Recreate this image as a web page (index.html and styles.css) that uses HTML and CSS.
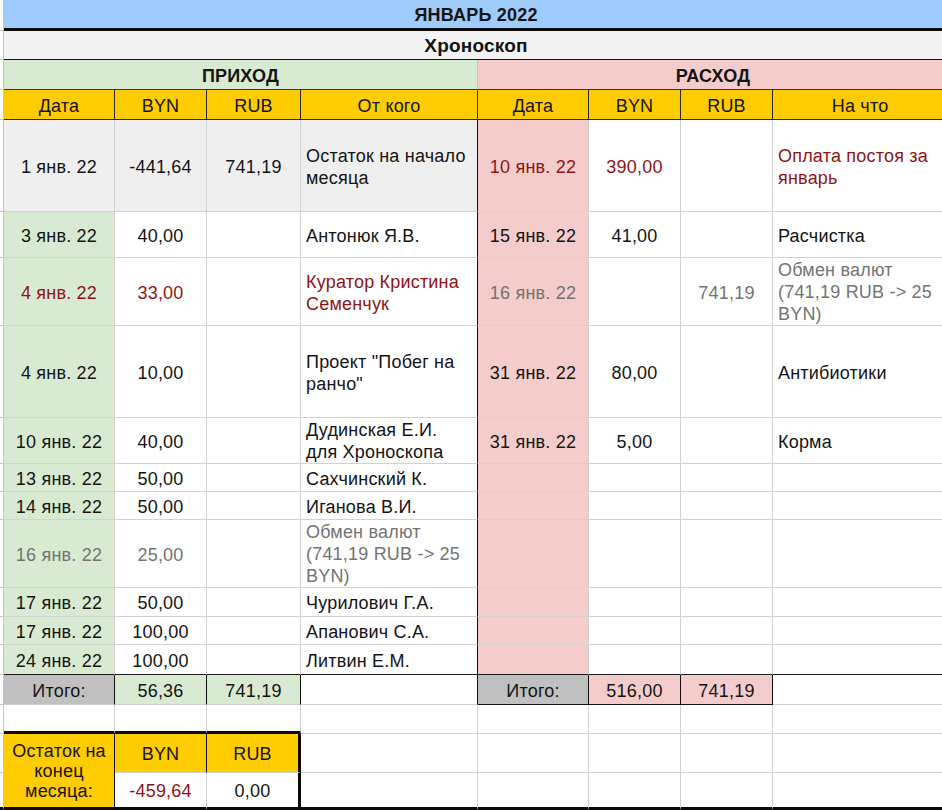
FILE: index.html
```html
<!DOCTYPE html>
<html lang="ru">
<head>
<meta charset="utf-8">
<title>Январь 2022 — Хроноскоп</title>
<link rel="stylesheet" href="styles.css">
</head>
<body>
<table class="sheet">
  <colgroup>
    <col class="w-strip"><col class="w-date"><col class="w-byn"><col class="w-rub"><col class="w-who">
    <col class="w-date"><col class="w-byn"><col class="w-rub2"><col class="w-what">
  </colgroup>
  <tbody>
    <tr class="r-title">
      <td class="strip"></td>
      <td class="title" colspan="8">ЯНВАРЬ 2022</td>
    </tr>
    <tr class="r-sub">
      <td class="strip"></td>
      <td class="subtitle" colspan="8">Хроноскоп</td>
    </tr>
    <tr class="r-sect">
      <td class="strip"></td>
      <td class="sect income" colspan="4">ПРИХОД</td>
      <td class="sect expense" colspan="4">РАСХОД</td>
    </tr>
    <tr class="r-head">
      <td class="strip"></td>
      <td class="head">Дата</td><td class="head">BYN</td><td class="head">RUB</td><td class="head">От кого</td>
      <td class="head">Дата</td><td class="head">BYN</td><td class="head">RUB</td><td class="head">На что</td>
    </tr>
    <tr class="r-92">
      <td class="strip"></td>
      <td class="grey">1 янв. 22</td><td class="grey">-441,64</td><td class="grey">741,19</td><td class="grey l div">Остаток на начало<br>месяца</td>
      <td class="pd red">10 янв. 22</td><td class="red">390,00</td><td></td><td class="l red">Оплата постоя за<br>январь</td>
    </tr>
    <tr class="r-46">
      <td class="strip"></td>
      <td class="gd">3 янв. 22</td><td>40,00</td><td></td><td class="l div">Антонюк Я.В.</td>
      <td class="pd">15 янв. 22</td><td>41,00</td><td></td><td class="l">Расчистка</td>
    </tr>
    <tr class="r-68">
      <td class="strip"></td>
      <td class="gd red">4 янв. 22</td><td class="red">33,00</td><td></td><td class="l div red">Куратор Кристина<br>Семенчук</td>
      <td class="pd muted">16 янв. 22</td><td></td><td class="muted">741,19</td><td class="l tight muted">Обмен валют<br>(741,19 RUB -&gt; 25<br>BYN)</td>
    </tr>
    <tr class="r-92">
      <td class="strip"></td>
      <td class="gd">4 янв. 22</td><td>10,00</td><td></td><td class="l div">Проект "Побег на<br>ранчо"</td>
      <td class="pd">31 янв. 22</td><td>80,00</td><td></td><td class="l">Антибиотики</td>
    </tr>
    <tr class="r-46">
      <td class="strip"></td>
      <td class="gd">10 янв. 22</td><td>40,00</td><td></td><td class="l tight div">Дудинская Е.И.<br>для Хроноскопа</td>
      <td class="pd">31 янв. 22</td><td>5,00</td><td></td><td class="l">Корма</td>
    </tr>
    <tr class="r-28">
      <td class="strip"></td>
      <td class="gd">13 янв. 22</td><td>50,00</td><td></td><td class="l div">Сахчинский К.</td>
      <td class="pd"></td><td></td><td></td><td></td>
    </tr>
    <tr class="r-28">
      <td class="strip"></td>
      <td class="gd">14 янв. 22</td><td>50,00</td><td></td><td class="l div">Иганова В.И.</td>
      <td class="pd"></td><td></td><td></td><td></td>
    </tr>
    <tr class="r-68">
      <td class="strip"></td>
      <td class="gd muted">16 янв. 22</td><td class="muted">25,00</td><td></td><td class="l tight div muted">Обмен валют<br>(741,19 RUB -&gt; 25<br>BYN)</td>
      <td class="pd"></td><td></td><td></td><td></td>
    </tr>
    <tr class="r-29">
      <td class="strip"></td>
      <td class="gd">17 янв. 22</td><td>50,00</td><td></td><td class="l div">Чурилович Г.А.</td>
      <td class="pd"></td><td></td><td></td><td></td>
    </tr>
    <tr class="r-28">
      <td class="strip"></td>
      <td class="gd">17 янв. 22</td><td>100,00</td><td></td><td class="l div">Апанович С.А.</td>
      <td class="pd"></td><td></td><td></td><td></td>
    </tr>
    <tr class="r-30 pre-total">
      <td class="strip"></td>
      <td class="gd">24 янв. 22</td><td>100,00</td><td></td><td class="l div">Литвин Е.М.</td>
      <td class="pd"></td><td></td><td></td><td></td>
    </tr>
    <tr class="r-30">
      <td class="strip"></td>
      <td class="tot-label">Итого:</td><td class="tot-in">56,36</td><td class="tot-in">741,19</td><td class="div"></td>
      <td class="tot-label boxb">Итого:</td><td class="tot-out boxb">516,00</td><td class="tot-out boxb">741,19</td><td></td>
    </tr>
    <tr class="r-29">
      <td class="strip"></td>
      <td class="box-top"></td><td class="box-top"></td><td class="box-top"></td><td></td>
      <td></td><td></td><td></td><td></td>
    </tr>
    <tr class="r-39">
      <td class="strip"></td>
      <td class="rest-label" rowspan="2">Остаток на<br>конец<br>месяца:</td>
      <td class="rest-head">BYN</td><td class="rest-head box-right">RUB</td><td></td>
      <td></td><td></td><td></td><td></td>
    </tr>
    <tr class="r-37 last">
      <td class="strip"></td>
      <td class="red">-459,64</td><td class="box-right">0,00</td><td></td>
      <td></td><td></td><td></td><td></td>
    </tr>
  </tbody>
</table>
</body>
</html>
```

FILE: styles.css
```css
html, body {
  margin: 0;
  padding: 0;
  background: #ffffff;
  overflow: hidden;
}

.sheet {
  border-collapse: separate;
  border-spacing: 0;
  table-layout: fixed;
  width: 948px;
  font-family: "Liberation Sans", Arial, sans-serif;
  font-size: 18px;
  line-height: 22.5px;
  letter-spacing: 0.2px;
  color: #141414;
}

.w-strip { width: 4px; }
.w-date { width: 111px; }
.w-byn { width: 92px; }
.w-rub { width: 94px; }
.w-rub2 { width: 92px; }
.w-who { width: 177px; }
.w-what { width: 175px; }

.sheet td {
  box-sizing: border-box;
  padding: 3px 5px 0;
  border-right: 1px solid #d2d2d2;
  border-bottom: 1px solid #d2d2d2;
  text-align: center;
  vertical-align: middle;
  white-space: nowrap;
  overflow: hidden;
}

.sheet td.strip {
  padding: 0;
  border-right: 1px solid #c4c4c4;
  border-bottom: 1px solid #c4c4c4;
}

/* row heights */
.r-title { height: 31px; }
.r-sub { height: 29px; }
.r-sect { height: 30px; }
.r-head { height: 30px; }
.r-92 { height: 92px; }
.r-68 { height: 68px; }
.r-46 { height: 46px; }
.r-39 { height: 39px; }
.r-37 { height: 37px; }
.r-30 { height: 30px; }
.r-29 { height: 29px; }
.r-28 { height: 28px; }

.sheet td.l { text-align: left; }
.sheet td.tight { line-height: 22px; padding-top: 1px; }

.sheet td.title {
  background: #9ecbf9;
  font-weight: bold;
  border-right: none;
  border-bottom: 3px solid #0a0a0a;
}

.sheet td.subtitle {
  background: #f3f3f3;
  font-weight: bold;
  font-size: 19px;
  border-right: none;
  border-bottom: 1px solid #151515;
}

.sheet td.sect {
  font-weight: bold;
  padding-top: 4px;
  border-bottom: 1px solid #333333;
}
.sheet td.income { background: #d9ead3; border-right: 1px solid #c2c2c2; }
.sheet td.expense { background: #f4cccc; border-right: none; }

.sheet td.head {
  background: #ffcc00;
  border-right: 1px solid #2a2a2a;
  border-bottom: 1px solid #2a2a2a;
}

.sheet td.div { border-right: 1px solid #111111; }

.sheet td.grey { background: #efefef; }
.sheet td.gd { background: #d9ead3; }
.sheet td.pd { background: #f4cccc; }

.red { color: #8e1414; }
.muted { color: #737373; }

.pre-total td { border-bottom-color: #1a1a1a; }
.sheet .pre-total td.strip { border-bottom-color: #c4c4c4; }

.sheet td.tot-label { background: #c0c0c0; border-right: 1px solid #111111; }
.sheet td.tot-in { background: #d9ead3; border-right: 1px solid #111111; }
.sheet td.tot-out { background: #f4cccc; border-right: 1px solid #111111; }
.sheet td.boxb { border-bottom: 1px solid #111111; }

.sheet td.box-top { border-bottom: 3px solid #0a0a0a; }

.sheet td.rest-label {
  background: #ffcc00;
  line-height: 20px;
  padding-top: 0;
  border-right: 1px solid #111111;
  border-bottom: 3px solid #0a0a0a;
}
.sheet td.rest-head {
  background: #ffcc00;
  border-right: 1px solid #111111;
}
.sheet td.box-right { border-right: 3px solid #0a0a0a; }

.last td { border-bottom: 3px solid #0a0a0a; }
.sheet .last td.strip { border-bottom: 3px solid #0a0a0a; }
```
